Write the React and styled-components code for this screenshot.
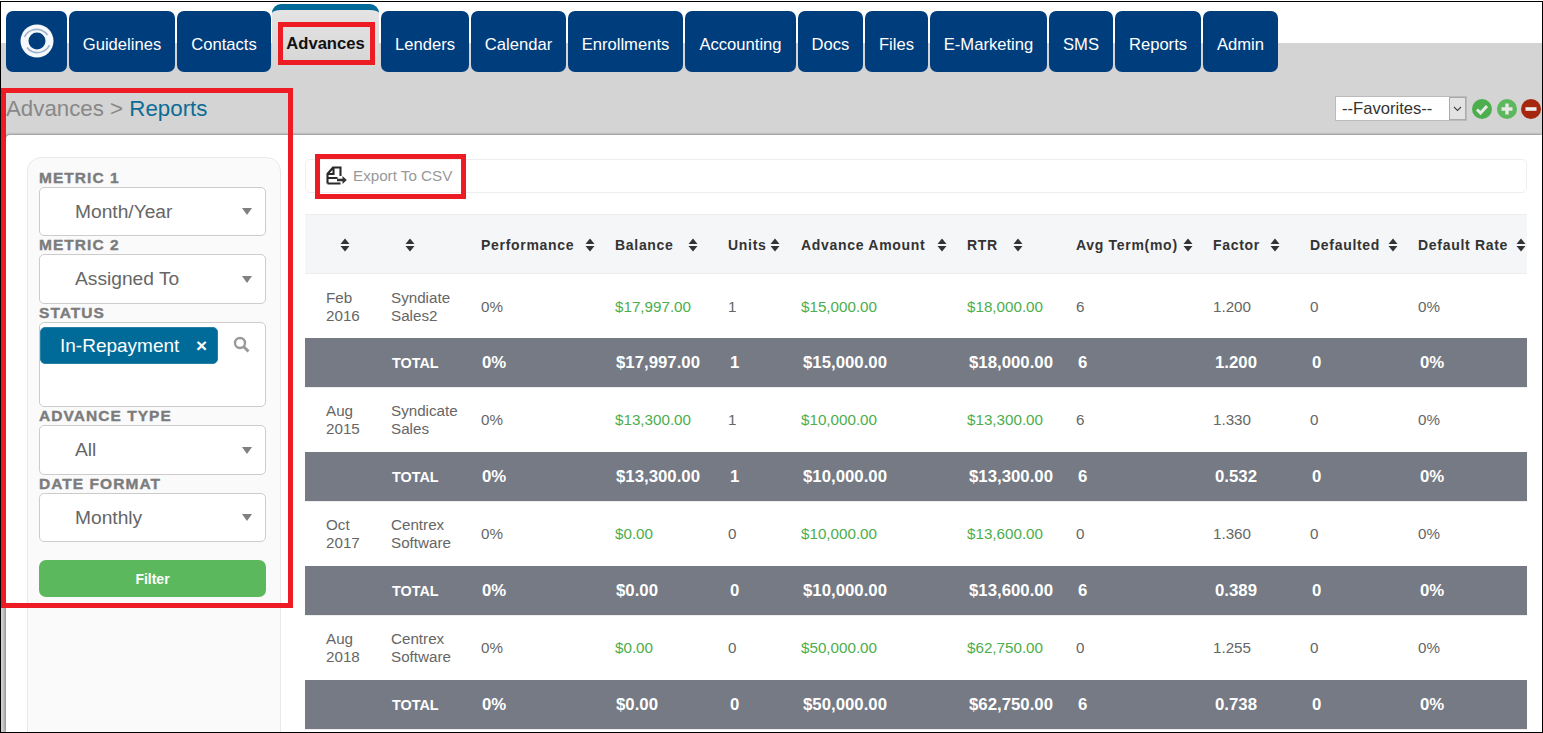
import styled, { createGlobalStyle } from 'styled-components'

const GlobalStyle = createGlobalStyle`
  html, body { margin: 0; padding: 0; background: #fff; }
  body { font-family: "Liberation Sans", Arial, sans-serif; }
`

const Page = styled.div`
  position: relative;
  box-sizing: border-box;
  width: 1543px;
  height: 732px;
  margin-top: 1px;
  border: 1px solid #000;
  overflow: hidden;
  display: flex;
  flex-direction: column;
  background: linear-gradient(to bottom, #fff 41px, #d4d4d4 41px);
`

const NavBar = styled.nav`
  display: flex;
  align-items: flex-end;
  gap: 2px;
  height: 70px;
  padding-left: 5px;
`

const Tab = styled.div`
  box-sizing: border-box;
  width: ${props => props.$w}px;
  height: 61px;
  display: flex;
  align-items: center;
  justify-content: center;
  padding-top: 6px;
  background: #003d7d;
  color: #fff;
  font-size: 16.6px;
  border-radius: 7px;
`

const LogoTab = styled(Tab)`
  padding-top: 0;
  padding-bottom: 2px;
`

const ActiveTab = styled(Tab)`
  height: 68px;
  margin-left: -1px;
  padding-top: 5px;
  color: #111;
  font-weight: bold;
  background: linear-gradient(to bottom, #e4e4e4, #d4d4d4);
  border-top: 6px solid #006b99;
  border-radius: 9px 9px 0 0;
`

const CrumbRow = styled.div`
  height: 63px;
  display: flex;
  align-items: center;
  justify-content: space-between;
  padding: 0 1px 0 5px;
`

const Crumb = styled.div`
  font-size: 22.3px;
  color: #888;
  margin-top: 10px;
`

const CrumbLink = styled.span`
  color: #0d6c95;
`

const FavGroup = styled.div`
  display: flex;
  align-items: center;
  margin-top: 10px;
`

const FavSelect = styled.div`
  box-sizing: border-box;
  width: 132px;
  height: 25px;
  display: flex;
  border: 1px solid #bbb;
  background: #fff;
  margin-right: 5px;
`

const FavText = styled.span`
  flex: 1;
  padding-left: 6px;
  font-size: 16.6px;
  line-height: 23px;
  color: #333;
`

const FavArrow = styled.span`
  box-sizing: border-box;
  width: 17px;
  display: flex;
  align-items: center;
  justify-content: center;
  background: #e3e3e3;
  border: 1px solid #aaa;
`

const RoundIcon = styled.svg`
  display: block;
  width: 20px;
  height: 20px;
  margin-right: ${props => props.$mr}px;
`

const Panel = styled.div`
  flex: 1;
  min-height: 0;
  display: flex;
  margin-left: 5px;
  padding: 22px 15px 0 21px;
  background: #fff;
  border-radius: 4px 0 0 0;
  box-shadow: 0 -1px 2px rgba(0, 0, 0, 0.2), -2px 0 3px rgba(0, 0, 0, 0.25);
`

const Sidebar = styled.aside`
  box-sizing: border-box;
  flex: none;
  width: 254px;
  height: 600px;
  padding: 11px 14px 0 11px;
  background: #fafafa;
  border: 1px solid #e9e9e9;
  border-radius: 14px;
`

const FieldLabel = styled.div`
  height: 18px;
  line-height: 17px;
  font-size: 15.5px;
  font-weight: bold;
  letter-spacing: 1.05px;
  color: #7c7c7c;
  -webkit-text-stroke: 0.4px #7c7c7c;
  white-space: nowrap;
`

const SelectBox = styled.div`
  box-sizing: border-box;
  height: ${props => props.$h}px;
  display: flex;
  align-items: center;
  justify-content: space-between;
  padding: 0 13px 0 35px;
  background: #fff;
  border: 1px solid #ccc;
  border-radius: 5px;
  font-size: 19.2px;
  color: #666;
`

const Caret = styled.span`
  width: 0;
  height: 0;
  border-left: 5px solid transparent;
  border-right: 5px solid transparent;
  border-top: 7px solid #808080;
`

const TagBox = styled.div`
  box-sizing: border-box;
  height: 85px;
  display: flex;
  align-items: flex-start;
  padding-top: 4px;
  background: #fff;
  border: 1px solid #ccc;
  border-radius: 5px;
`

const Tag = styled.div`
  box-sizing: border-box;
  width: 178px;
  height: 37px;
  display: flex;
  align-items: center;
  justify-content: space-between;
  padding: 0 10px 0 19px;
  background: #006b99;
  border: 1px solid #2a7fa5;
  border-radius: 5px;
  color: #fff;
  font-size: 19px;
`

const TagClose = styled.span`
  font-size: 19px;
  font-weight: bold;
`

const SearchIcon = styled.svg`
  width: 17px;
  height: 17px;
  margin: 9px 0 0 15px;
`

const FilterButton = styled.div`
  height: 37px;
  margin-top: 18px;
  display: flex;
  align-items: center;
  justify-content: center;
  background: #5cb85c;
  border-radius: 7px;
  color: #fff;
  font-size: 14px;
  font-weight: bold;
`

const Main = styled.main`
  flex: 1;
  min-width: 0;
  margin-left: 24px;
  padding-top: 2px;
`

const Toolbar = styled.div`
  box-sizing: border-box;
  height: 34px;
  display: flex;
  align-items: center;
  gap: 6px;
  padding: 0 0 2px 20px;
  border: 1px solid #eee;
  border-radius: 5px;
  color: #999;
  font-size: 15.2px;
`

const Table = styled.table`
  width: 100%;
  margin-top: 21px;
  border-collapse: collapse;
  table-layout: fixed;
`

const Col = styled.col`
  width: ${props => props.$w}px;
`

const HeadRow = styled.tr`
  height: 59px;
  background: #f5f6f8;
  border-top: 1px solid #eee;
  border-bottom: 1px solid #eee;
`

const HeadCell = styled.th`
  padding: 2px 0 0 21px;
  text-align: left;
  font-size: 14px;
  font-weight: bold;
  letter-spacing: 0.7px;
  color: #333;
  white-space: nowrap;
`

const HeadInner = styled.div`
  display: flex;
  align-items: center;
  justify-content: space-between;
  width: ${props => props.$w}px;
`

const SortIcon = styled.svg`
  display: block;
  flex: none;
  width: 10px;
  height: 14px;
`

const DataRow = styled.tr`
  height: 64px;
  background: #fff;
`

const DataCell = styled.td`
  padding: ${props => props.$first ? 2 : 0}px 0 0 21px;
  font-size: 15.2px;
  line-height: 18px;
  color: ${props => props.$money ? '#4cae4c' : '#666'};
`

const TotalRow = styled.tr`
  height: 50px;
  background: #757a84;
  border-bottom: 1px solid #eee;
`

const TotalCell = styled.td`
  padding: 2px 0 0 ${props => props.$pl || 22}px;
  color: #fff;
  font-weight: bold;
  font-size: ${props => props.$small ? 14.4 : 16.8}px;
  white-space: nowrap;
`

const Callout = styled.div`
  position: absolute;
  box-sizing: border-box;
  left: ${props => props.$x}px;
  top: ${props => props.$y}px;
  width: ${props => props.$w}px;
  height: ${props => props.$h}px;
  border: 5px solid #ed1c24;
  pointer-events: none;
`

const tabs = [
  ['Guidelines', 106], ['Contacts', 94], ['Advances', 107], ['Lenders', 88],
  ['Calendar', 95], ['Enrollments', 115], ['Accounting', 111], ['Docs', 65],
  ['Files', 63], ['E-Marketing', 117], ['SMS', 64], ['Reports', 86], ['Admin', 75],
]

const colWidths = [65, 90, 134, 113, 73, 166, 109, 137, 97, 108, 130]

const headers = [
  ['', 24], ['', 24], ['Performance', 114], ['Balance', 83], ['Units', 52],
  ['Advance Amount', 146], ['RTR', 56], ['Avg Term(mo)', 117], ['Factor', 67],
  ['Defaulted', 88], ['Default Rate', 108],
]

const rows = [
  {
    date: ['Feb', '2016'], who: ['Syndiate', 'Sales2'], balance: '$17,997.00', units: '1',
    amount: '$15,000.00', rtr: '$18,000.00', term: '6', factor: '1.200',
    total: { units: '1', term: '6', factor: '1.200' },
  },
  {
    date: ['Aug', '2015'], who: ['Syndicate', 'Sales'], balance: '$13,300.00', units: '1',
    amount: '$10,000.00', rtr: '$13,300.00', term: '6', factor: '1.330',
    total: { units: '1', term: '6', factor: '0.532' },
  },
  {
    date: ['Oct', '2017'], who: ['Centrex', 'Software'], balance: '$0.00', units: '0',
    amount: '$10,000.00', rtr: '$13,600.00', term: '0', factor: '1.360',
    total: { units: '0', term: '6', factor: '0.389' },
  },
  {
    date: ['Aug', '2018'], who: ['Centrex', 'Software'], balance: '$0.00', units: '0',
    amount: '$50,000.00', rtr: '$62,750.00', term: '0', factor: '1.255',
    total: { units: '0', term: '6', factor: '0.738' },
  },
]

const Sort = () => (
  <SortIcon viewBox="0 0 10 14">
    <path d="M5 0.5 L9.5 6 H0.5 Z M0.5 8 H9.5 L5 13.5 Z" fill="#333" />
  </SortIcon>
)

const Logo = () => (
  <svg width="34" height="34" viewBox="0 0 34 34">
    <circle cx="17" cy="17" r="16.5" fill="#f6f8fb" />
    <path d="M4.5 13 C7 7 15 3.5 22 6.5 C25 7.8 26.5 9.5 27.5 11" fill="none" stroke="#9db2cd" strokeWidth="1.6" />
    <path d="M29.5 21 C27 27 19 30.5 12 27.5 C9.5 26.5 8 25 7 23.5" fill="none" stroke="#9db2cd" strokeWidth="1.6" />
    <circle cx="17" cy="17" r="8.5" fill="#003d7d" />
  </svg>
)

const ExportIcon = () => (
  <svg width="21" height="19" viewBox="0 0 21 19">
    <path d="M1.5 17.5 V8 L7 1.5 H14.5 V10 M1.5 12 H11.5 M1.5 17.5 H14.5 M2 8 H7.5 V2" fill="none" stroke="#2a2a2a" strokeWidth="2.1" />
    <path d="M11 12.8 H16.5 V10 L20.8 14 L16.5 18 V15.2 H11 Z" fill="#333" />
  </svg>
)

const TotalCells = ({ row }) => (
  <TotalRow>
    <td />
    <TotalCell $small>TOTAL</TotalCell>
    <TotalCell>{'0%'}</TotalCell>
    <TotalCell>{row.balance}</TotalCell>
    <TotalCell $pl={23}>{row.total.units}</TotalCell>
    <TotalCell $pl={23}>{row.amount}</TotalCell>
    <TotalCell $pl={23}>{row.rtr}</TotalCell>
    <TotalCell $pl={23}>{row.total.term}</TotalCell>
    <TotalCell $pl={23}>{row.total.factor}</TotalCell>
    <TotalCell $pl={23}>0</TotalCell>
    <TotalCell $pl={23}>0%</TotalCell>
  </TotalRow>
)

const App = () => (
  <>
    <GlobalStyle />
    <Page>
      <NavBar>
        <LogoTab $w={61}><Logo /></LogoTab>
        {tabs.map(([name, w]) => name === 'Advances'
          ? <ActiveTab key={name} $w={w}>{name}</ActiveTab>
          : <Tab key={name} $w={w}>{name}</Tab>)}
      </NavBar>
      <CrumbRow>
        <Crumb>Advances &gt; <CrumbLink>Reports</CrumbLink></Crumb>
        <FavGroup>
          <FavSelect>
            <FavText>--Favorites--</FavText>
            <FavArrow>
              <svg width="9" height="6" viewBox="0 0 9 6">
                <path d="M1 1 L4.5 4.5 L8 1" fill="none" stroke="#444" strokeWidth="1.1" />
              </svg>
            </FavArrow>
          </FavSelect>
          <RoundIcon $mr={5} viewBox="0 0 20 20">
            <circle cx="10" cy="10" r="10" fill="#4cae4c" />
            <path d="M5 10.5 L8.5 14 L15 7" fill="none" stroke="#e8e8e8" strokeWidth="3" />
          </RoundIcon>
          <RoundIcon $mr={4} viewBox="0 0 20 20">
            <circle cx="10" cy="10" r="10" fill="#5cb85c" />
            <path d="M10 4.5 V15.5 M4.5 10 H15.5" stroke="#e8e8e8" strokeWidth="3.4" />
          </RoundIcon>
          <RoundIcon $mr={0} viewBox="0 0 20 20">
            <circle cx="10" cy="10" r="10" fill="#a5280e" />
            <path d="M4.5 10 H15.5" stroke="#eee" strokeWidth="3.6" />
          </RoundIcon>
        </FavGroup>
      </CrumbRow>
      <Panel>
        <Sidebar>
          <FieldLabel>METRIC 1</FieldLabel>
          <SelectBox $h={49}>Month/Year<Caret /></SelectBox>
          <FieldLabel>METRIC 2</FieldLabel>
          <SelectBox $h={50}>Assigned To<Caret /></SelectBox>
          <FieldLabel>STATUS</FieldLabel>
          <TagBox>
            <Tag>In-Repayment<TagClose>×</TagClose></Tag>
            <SearchIcon viewBox="0 0 17 17">
              <circle cx="7" cy="7" r="5" fill="none" stroke="#999" strokeWidth="2.4" />
              <path d="M10.5 10.5 L15.5 15.5" stroke="#999" strokeWidth="3" />
            </SearchIcon>
          </TagBox>
          <FieldLabel>ADVANCE TYPE</FieldLabel>
          <SelectBox $h={50}>All<Caret /></SelectBox>
          <FieldLabel>DATE FORMAT</FieldLabel>
          <SelectBox $h={49}>Monthly<Caret /></SelectBox>
          <FilterButton>Filter</FilterButton>
        </Sidebar>
        <Main>
          <Toolbar><ExportIcon />Export To CSV</Toolbar>
          <Table>
            <colgroup>
              {colWidths.map((w, i) => <Col key={i} $w={w} />)}
            </colgroup>
            <thead>
              <HeadRow>
                {headers.map(([label, w], i) => (
                  <HeadCell key={i}>
                    <HeadInner $w={w}><span>{label}</span><Sort /></HeadInner>
                  </HeadCell>
                ))}
              </HeadRow>
            </thead>
            <tbody>
              {rows.flatMap((row, i) => [
                <DataRow key={`d${i}`}>
                  <DataCell $first={i === 0}>{row.date[0]}<br />{row.date[1]}</DataCell>
                  <DataCell $first={i === 0}>{row.who[0]}<br />{row.who[1]}</DataCell>
                  <DataCell $first={i === 0}>0%</DataCell>
                  <DataCell $first={i === 0} $money>{row.balance}</DataCell>
                  <DataCell $first={i === 0}>{row.units}</DataCell>
                  <DataCell $first={i === 0} $money>{row.amount}</DataCell>
                  <DataCell $first={i === 0} $money>{row.rtr}</DataCell>
                  <DataCell $first={i === 0}>{row.term}</DataCell>
                  <DataCell $first={i === 0}>{row.factor}</DataCell>
                  <DataCell $first={i === 0}>0</DataCell>
                  <DataCell $first={i === 0}>0%</DataCell>
                </DataRow>,
                <TotalCells key={`t${i}`} row={row} />,
              ])}
            </tbody>
          </Table>
        </Main>
      </Panel>
      <Callout $x={277} $y={20} $w={97} $h={43} />
      <Callout $x={0} $y={86} $w={292} $h={520} />
      <Callout $x={314} $y={152} $w={151} $h={45} />
    </Page>
  </>
)

export default App
